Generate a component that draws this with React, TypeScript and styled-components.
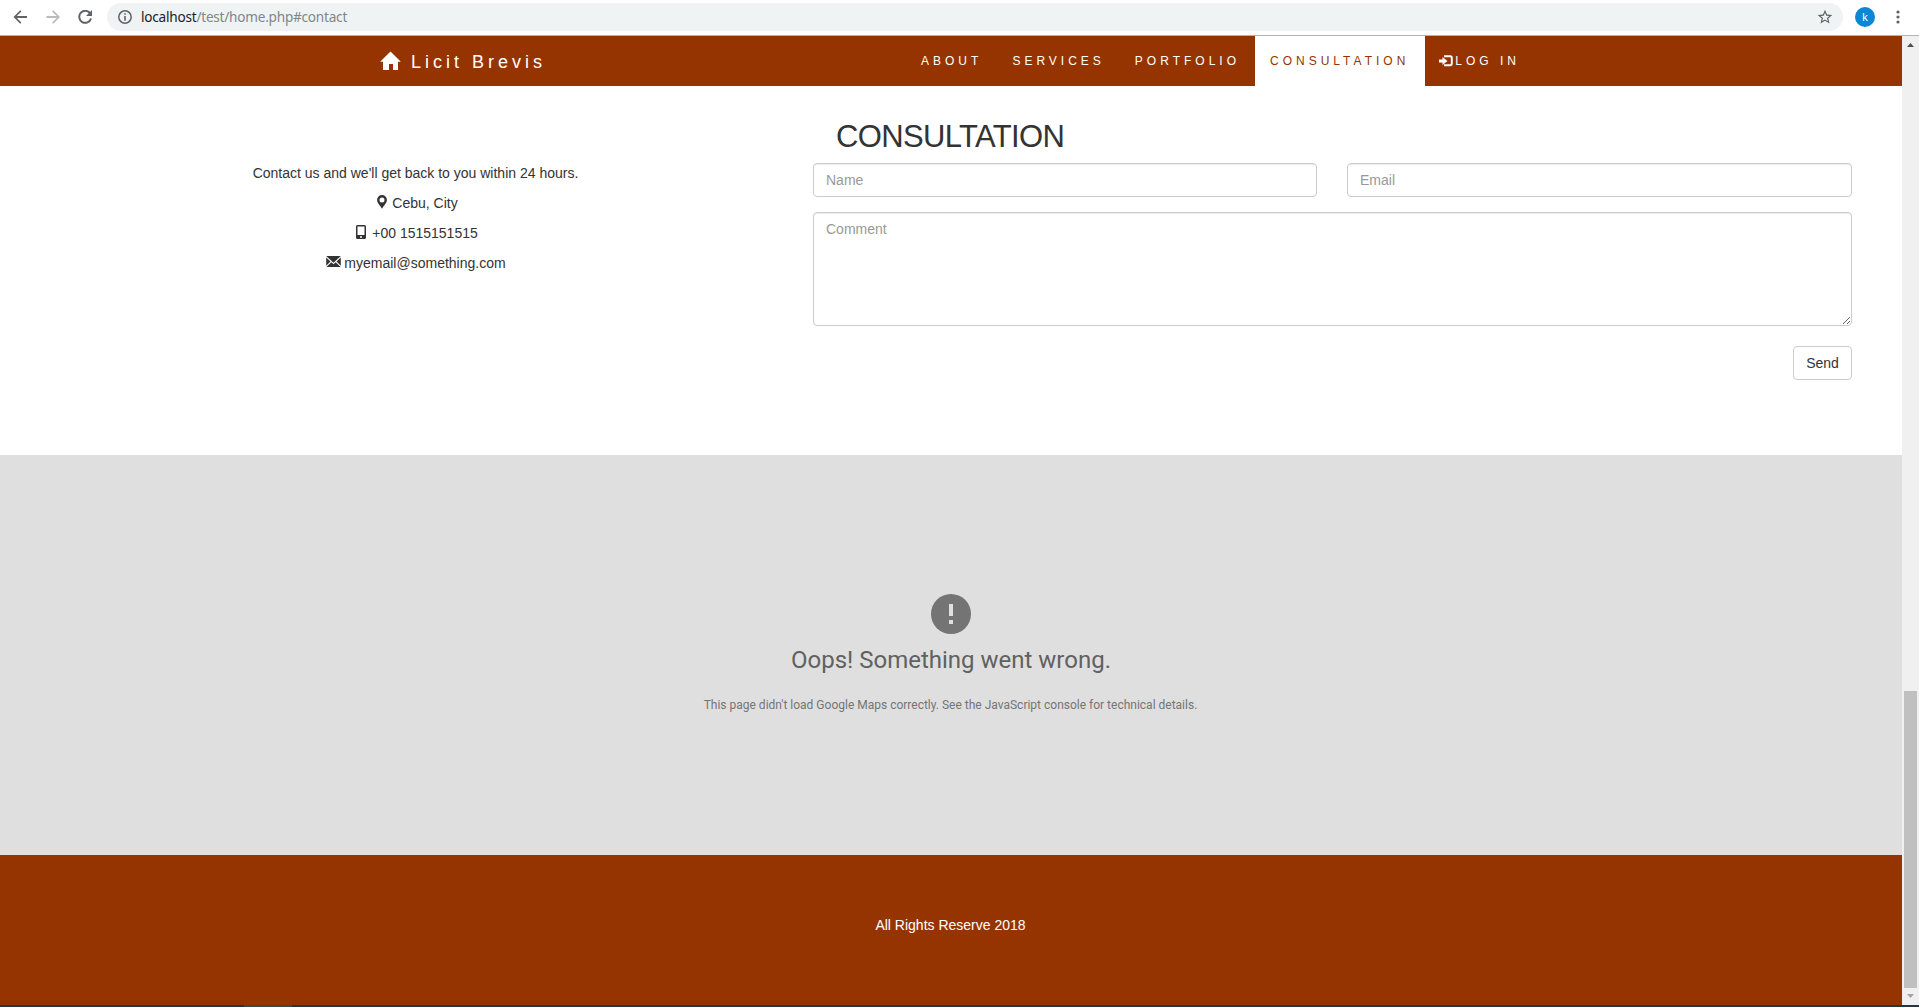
import React from "react";
import styled, { createGlobalStyle, css } from "styled-components";

const RUST = "#963400";

const GlobalStyle = createGlobalStyle`
  *, *::before, *::after { box-sizing: border-box; }
  body {
    margin: 0;
    overflow: hidden;
    background: #fff;
    color: #333;
    font: 14px/20px "Liberation Sans", Arial, sans-serif;
  }
`;

const Window = styled.div`
  display: flex;
  flex-direction: column;
  width: 1919px;
  height: 1007px;
  overflow: hidden;
`;

const Toolbar = styled.header`
  display: flex;
  align-items: center;
  height: 36px;
  padding: 0 19px 1px 12px;
  border-bottom: 1px solid #b3b3b3;
  background: #fff;
`;

const ToolIcon = styled.svg<{ $gap?: number }>`
  flex: none;
  display: block;
  margin-right: ${(p) => p.$gap ?? 0}px;
`;

const AddressBar = styled.div`
  flex: 1;
  display: flex;
  align-items: center;
  height: 28px;
  padding: 0 10px 0 11px;
  border-radius: 14px;
  background: #eff3f4;
`;

const Url = styled.span`
  flex: 1;
  padding-left: 9px;
  font: 13.6px/20px "Noto Sans", "Open Sans", sans-serif;
  letter-spacing: -0.23px;
  color: #80868b;
`;

const Host = styled.span`
  color: #202124;
`;

const Avatar = styled.div`
  width: 20px;
  height: 20px;
  margin: 0 21px 0 12px;
  border-radius: 50%;
  background: #0b87d3;
  color: #fff;
  font: 11px/20px "Noto Sans", sans-serif;
  text-align: center;
`;

const Viewport = styled.div`
  display: flex;
  height: 969px;
`;

const Page = styled.main`
  width: 1902px;
`;

const Navbar = styled.nav`
  height: 50px;
  background: ${RUST};
`;

const NavContainer = styled.div`
  display: flex;
  justify-content: space-between;
  width: 1170px;
  margin: 0 auto;
  padding-right: 1px;
`;

const Brand = styled.a`
  display: flex;
  height: 50px;
  padding: 16px 15px 14px;
  color: #fff;
  font-size: 18px;
  line-height: 20px;
  letter-spacing: 4px;
`;

const BrandIcon = styled.svg`
  display: block;
  margin: -1px 10px 0 -1px;
`;

const NavList = styled.div`
  display: flex;
`;

const NavItem = styled.a<{ $active?: boolean }>`
  display: flex;
  height: 50px;
  padding: 15px;
  color: #fff;
  font-size: 12px;
  line-height: 20px;
  letter-spacing: 4px;
  ${(p) =>
    p.$active &&
    css`
      padding-right: 16px;
      background: #fff;
      color: ${RUST};
    `}
`;

const LoginIcon = styled.svg`
  display: block;
  margin: 4px 2px 0 -1px;
`;

const Contact = styled.section`
  display: grid;
  grid-template-columns: 795px 1039px;
  grid-template-rows: 45px 1fr;
  height: 369px;
  padding: 32px 0 0 18px;
`;

const Title = styled.h2`
  grid-column: 2;
  margin: 0;
  padding: 1px 0 0 23px;
  font-size: 31px;
  font-weight: 400;
  line-height: 36px;
  letter-spacing: -0.65px;
`;

const Details = styled.div`
  grid-column: 1;
`;

const Line = styled.p<{ $indent?: number }>`
  display: flex;
  justify-content: center;
  margin: 0 0 10px;
  padding-left: ${(p) => p.$indent ?? 0}px;
`;

const LineIcon = styled.svg<{ $gap?: number }>`
  display: block;
  margin: 2px ${(p) => p.$gap ?? 4}px 0 0;
`;

const Form = styled.form`
  display: flex;
  flex-direction: column;
  align-items: stretch;
`;

const FieldRow = styled.div`
  display: grid;
  grid-template-columns: 504px 505px;
  gap: 30px;
  margin-bottom: 15px;
`;

const field = css`
  display: block;
  width: 100%;
  padding: 6px 12px;
  border: 1px solid #ccc;
  border-radius: 4px;
  outline: none;
  background: #fff;
  box-shadow: inset 0 1px 1px rgba(0, 0, 0, 0.075);
  color: #555;
  font: 14px/20px "Liberation Sans", Arial, sans-serif;
  &::placeholder {
    color: #999;
    opacity: 1;
  }
`;

const Input = styled.input`
  ${field}
  height: 34px;
`;

const TextArea = styled.textarea`
  ${field}
  height: 114px;
  resize: vertical;
`;

const SendButton = styled.button`
  align-self: flex-end;
  width: 59px;
  height: 34px;
  margin-top: 20px;
  padding: 0;
  border: 1px solid #ccc;
  border-radius: 4px;
  background: #fff;
  color: #333;
  font: 14px/20px "Liberation Sans", Arial, sans-serif;
`;

const MapError = styled.section`
  display: flex;
  flex-direction: column;
  align-items: center;
  height: 400px;
  padding-top: 138px;
  background: #dfdfdf;
  font-family: Roboto, sans-serif;
`;

const ErrorTitle = styled.div`
  margin-top: 8px;
  color: #616161;
  font-size: 24px;
  line-height: 34px;
`;

const ErrorText = styled.div`
  margin-top: 18px;
  padding-right: 1px;
  color: #757575;
  font-size: 12px;
  line-height: 20px;
`;

const Footer = styled.footer`
  height: 150px;
  padding: 60px 1px 0 0;
  background: ${RUST};
  color: #fff;
  text-align: center;
`;

const ScrollTrack = styled.div`
  display: flex;
  flex-direction: column;
  justify-content: space-between;
  align-items: center;
  width: 17px;
  background: #f0f0f0;
`;

const ScrollSpace = styled.div`
  flex: 1;
`;

const ScrollThumb = styled.div`
  width: 13px;
  height: 297px;
  background: #c0c0c0;
`;

const TaskbarEdge = styled.div`
  display: flex;
  height: 2px;
  padding-left: 244px;
  background: #28343f;
`;

const TaskbarItem = styled.div`
  width: 48px;
  background: #414748;
`;

const arrowPath = "M14 6.1H3.8l4.6-4.6L7.2.3.5 7l6.7 6.7 1.2-1.2-4.6-4.6H14z";

export default function App() {
  return (
    <Window>
      <GlobalStyle />
      <Toolbar>
        <ToolIcon $gap={16} width="17" height="14" viewBox="-1 0 17 14" fill="#5f6368">
          <path d={arrowPath} />
        </ToolIcon>
        <ToolIcon $gap={16} width="17" height="14" viewBox="-1 0 17 14" fill="#bababd">
          <path d={arrowPath} transform="translate(14.5 0) scale(-1 1)" />
        </ToolIcon>
        <ToolIcon $gap={14} width="15" height="14" viewBox="0 0 15 14">
          <path
            d="M12.3 3.6A6 6 0 1 0 13 8.5"
            fill="none"
            stroke="#5f6368"
            strokeWidth="2"
          />
          <path d="M14 0v6H8z" fill="#5f6368" />
        </ToolIcon>
        <AddressBar>
          <ToolIcon width="14" height="14" viewBox="0 0 14 14">
            <circle cx="7" cy="7" r="6.2" fill="none" stroke="#5f6368" strokeWidth="1.5" />
            <path d="M6.2 3.3h1.6v1.5H6.2zM6.2 6h1.6v4.7H6.2z" fill="#5f6368" />
          </ToolIcon>
          <Url>
            <Host>localhost</Host>/test/home.php#contact
          </Url>
          <ToolIcon width="16" height="16" viewBox="1 1 22 22" fill="#5f6368">
            <path d="M22 9.24l-7.19-.62L12 2 9.19 8.63 2 9.24l5.46 4.73L5.82 21 12 17.27 18.18 21l-1.63-7.03L22 9.24zM12 15.4l-3.76 2.27 1-4.28-3.32-2.88 4.38-.38L12 6.1l1.71 4.04 4.38.38-3.32 2.88 1 4.28L12 15.4z" />
          </ToolIcon>
        </AddressBar>
        <Avatar>k</Avatar>
        <ToolIcon width="4" height="14" viewBox="0 0 4 14" fill="#5f6368">
          <circle cx="2" cy="2" r="1.6" />
          <circle cx="2" cy="7" r="1.6" />
          <circle cx="2" cy="12" r="1.6" />
        </ToolIcon>
      </Toolbar>
      <Viewport>
        <Page>
          <Navbar>
            <NavContainer>
              <Brand>
                <BrandIcon width="21" height="20" viewBox="0 0 21 20" fill="#fff">
                  <path d="M10.5.5L20.8 10.8H18V19h-5v-6H9v6H3v-8.2H.2z" />
                </BrandIcon>
                Licit Brevis
              </Brand>
              <NavList>
                <NavItem>ABOUT</NavItem>
                <NavItem>SERVICES</NavItem>
                <NavItem>PORTFOLIO</NavItem>
                <NavItem $active>CONSULTATION</NavItem>
                <NavItem>
                  <LoginIcon width="14" height="12" viewBox="0 0 14 12">
                    <path d="M0 4.5h3.5V2L8.5 6l-5 4V7.5H0z" fill="#fff" />
                    <path
                      d="M5 1.3h6.2a1.6 1.6 0 0 1 1.6 1.6v5.7a1.6 1.6 0 0 1-1.6 1.6H5"
                      fill="none"
                      stroke="#fff"
                      strokeWidth="1.9"
                    />
                  </LoginIcon>
                  LOG IN
                </NavItem>
              </NavList>
            </NavContainer>
          </Navbar>
          <Contact>
            <Title>CONSULTATION</Title>
            <Details>
              <Line>Contact us and we'll get back to you within 24 hours.</Line>
              <Line $indent={3}>
                <LineIcon width="12" height="14" viewBox="0 0 12 14" fill="#333">
                  <path
                    fillRule="evenodd"
                    d="M6 0a4.9 4.9 0 0 1 4.9 4.9C10.9 8 7.5 10.5 6 13.8 4.5 10.5 1.1 8 1.1 4.9A4.9 4.9 0 0 1 6 0zM6 2.4a2.5 2.5 0 1 0 0 5 2.5 2.5 0 0 0 0-5z"
                  />
                </LineIcon>
                Cebu, City
              </Line>
              <Line $indent={2}>
                <LineIcon $gap={5} width="12" height="15" viewBox="0 0 12 15" fill="#333">
                  <path
                    fillRule="evenodd"
                    d="M2.5 0h7A1.5 1.5 0 0 1 11 1.5v11A1.5 1.5 0 0 1 9.5 14h-7A1.5 1.5 0 0 1 1 12.5v-11A1.5 1.5 0 0 1 2.5 0zM2.5 1.5V10h7V1.5zM5 11.2v1.5h2v-1.5z"
                  />
                </LineIcon>
                +00 1515151515
              </Line>
              <Line $indent={1}>
                <LineIcon $gap={3} width="15" height="14" viewBox="0 0 15 14" fill="#333">
                  <path d="M.2 1h14.6L7.5 7.8zM.2 2.6L4.5 6.5.2 10.7zM14.8 2.6v8.1L10.5 6.5zM5.3 7.3l2.2 2 2.2-2 4.9 4.7H.4z" />
                </LineIcon>
                myemail@something.com
              </Line>
            </Details>
            <Form onSubmit={(e) => e.preventDefault()}>
              <FieldRow>
                <Input placeholder="Name" />
                <Input placeholder="Email" />
              </FieldRow>
              <TextArea placeholder="Comment" />
              <SendButton type="submit">Send</SendButton>
            </Form>
          </Contact>
          <MapError>
            <svg width="42" height="42" viewBox="0 0 42 42">
              <circle cx="21" cy="21" r="20" fill="#747474" />
              <path d="M19 11h4v12h-4zM19 27h4v4h-4z" fill="#dfdfdf" />
            </svg>
            <ErrorTitle>Oops! Something went wrong.</ErrorTitle>
            <ErrorText>
              This page didn't load Google Maps correctly. See the JavaScript console for
              technical details.
            </ErrorText>
          </MapError>
          <Footer>All Rights Reserve 2018</Footer>
        </Page>
        <ScrollTrack>
          <svg width="17" height="17" viewBox="0 0 17 17">
            <path d="M5 11l3.5-4L12 11z" fill="#505050" />
          </svg>
          <ScrollSpace />
          <ScrollThumb />
          <svg width="17" height="17" viewBox="0 0 17 17">
            <path d="M5 6h7l-3.5 4z" fill="#a3a3a3" />
          </svg>
        </ScrollTrack>
      </Viewport>
      <TaskbarEdge>
        <TaskbarItem />
      </TaskbarEdge>
    </Window>
  );
}
